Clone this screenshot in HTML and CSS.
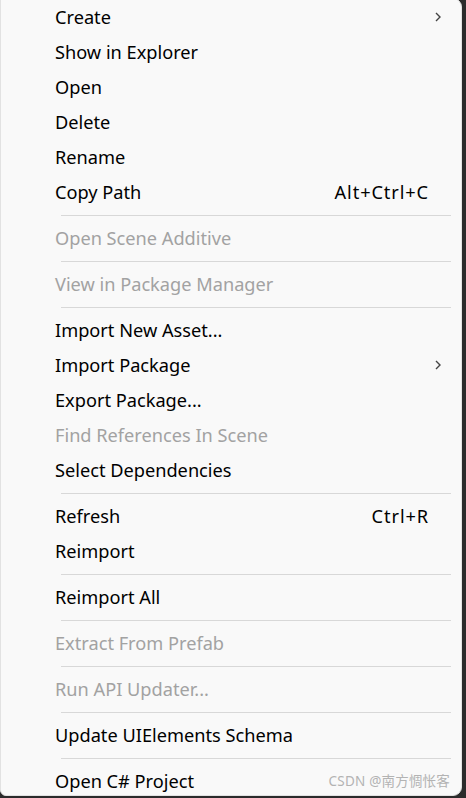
FILE: index.html
```html
<!DOCTYPE html>
<html>
<head>
<meta charset="utf-8">
<link rel="stylesheet" href="styles.css">
</head>
<body>
<div class="menu">
  <div class="item"><span class="label">Create</span><span class="key"></span><span class="sub"><svg width="6" height="10" viewBox="0 0 6 10"><polyline points="1,1 5,5 1,9" fill="none" stroke="#444" stroke-width="1.4"/></svg></span></div>
  <div class="item"><span class="label">Show in Explorer</span></div>
  <div class="item"><span class="label">Open</span></div>
  <div class="item"><span class="label">Delete</span></div>
  <div class="item"><span class="label">Rename</span></div>
  <div class="item"><span class="label">Copy Path</span><span class="key">Alt+Ctrl+C</span></div>
  <div class="sep"></div>
  <div class="item disabled"><span class="label">Open Scene Additive</span></div>
  <div class="sep"></div>
  <div class="item disabled"><span class="label">View in Package Manager</span></div>
  <div class="sep"></div>
  <div class="item"><span class="label">Import New Asset...</span></div>
  <div class="item"><span class="label">Import Package</span><span class="key"></span><span class="sub"><svg width="6" height="10" viewBox="0 0 6 10"><polyline points="1,1 5,5 1,9" fill="none" stroke="#444" stroke-width="1.4"/></svg></span></div>
  <div class="item"><span class="label">Export Package...</span></div>
  <div class="item disabled"><span class="label">Find References In Scene</span></div>
  <div class="item"><span class="label">Select Dependencies</span></div>
  <div class="sep"></div>
  <div class="item"><span class="label">Refresh</span><span class="key">Ctrl+R</span></div>
  <div class="item"><span class="label">Reimport</span></div>
  <div class="sep"></div>
  <div class="item"><span class="label">Reimport All</span></div>
  <div class="sep"></div>
  <div class="item disabled"><span class="label">Extract From Prefab</span></div>
  <div class="sep"></div>
  <div class="item disabled"><span class="label">Run API Updater...</span></div>
  <div class="sep"></div>
  <div class="item"><span class="label">Update UIElements Schema</span></div>
  <div class="sep"></div>
  <div class="item"><span class="label">Open C# Project</span></div>
  <div class="watermark">CSDN @南方惆怅客</div>
</div>
</body>
</html>
```
FILE: styles.css
```css
html, body {
  margin: 0;
  padding: 0;
  background: #2b2b2b;
  width: 466px;
  height: 798px;
  overflow: hidden;
}
.menu {
  position: relative;
  box-sizing: border-box;
  width: 462px;
  height: 798px;
  margin-top: -2px;
  background: #f9f9f9;
  border: 1px solid #e2e2e2;
  border-radius: 0 9px 9px 6px;
  font-family: "Noto Sans", "Noto Sans CJK SC", sans-serif;
  font-size: 18.2px;
  color: #000;
  overflow: hidden;
}
.item {
  display: flex;
  align-items: center;
  height: 35px;
  padding-left: 54px;
  white-space: nowrap;
}
.label {
  flex: 1;
}
.key {
  letter-spacing: 0.9px;
  margin-right: -1px;
}
.item::after {
  content: "";
  width: 33px;
  flex: none;
}
.item:has(.sub)::after {
  display: none;
}
.sub {
  width: 33px;
  flex: none;
  display: flex;
  align-items: center;
  padding-left: 7px;
  box-sizing: border-box;
}
.sub svg {
  display: block;
}
.disabled {
  color: #a2a2a2;
}
.sep {
  height: 1px;
  background: #d8d8d8;
  margin: 6px 10px 4px 60px;
}
.watermark {
  position: absolute;
  right: 11px;
  bottom: 5px;
  font-size: 13.5px;
  color: #b3b3b3;
  letter-spacing: 0.2px;
}
```
